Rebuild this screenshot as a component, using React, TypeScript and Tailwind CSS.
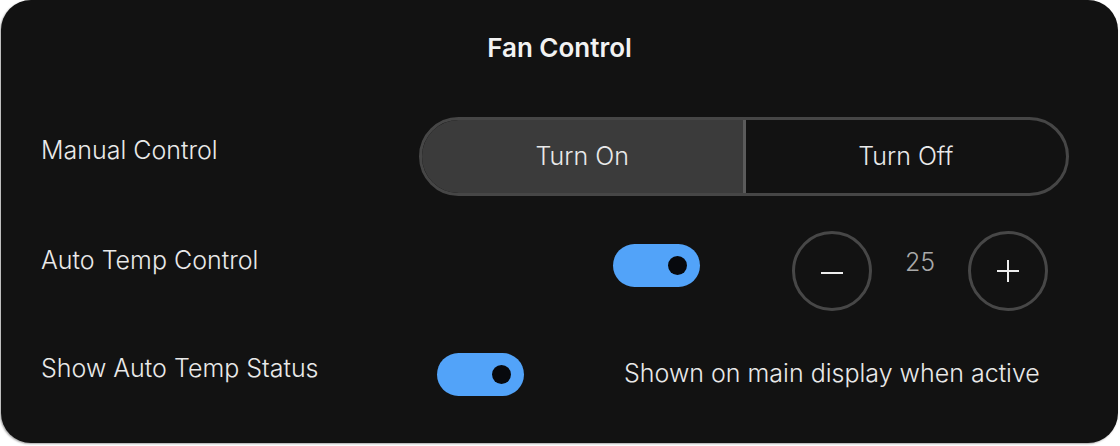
import type { ReactNode } from 'react';

function Toggle({ className = '' }: { className?: string }) {
  return (
    <div
      className={`flex h-[43px] w-[87px] shrink-0 items-center justify-end rounded-full bg-[#52a3f9] pr-[13px] ${className}`}
    >
      <span className="h-[19px] w-[19px] rounded-full bg-[#07090d]" />
    </div>
  );
}

function RoundButton({ children }: { children: ReactNode }) {
  return (
    <button className="flex h-[80px] w-[80px] shrink-0 items-center justify-center rounded-full border-[3px] border-[#474747] text-[#ededed]">
      {children}
    </button>
  );
}

export default function App() {
  return (
    <div className="h-[446px] w-[1120px] bg-white">
      <div className="ml-[1px] flex h-[443px] w-[1117px] flex-col rounded-[30px] bg-[#121212] font-['Inter',sans-serif] text-[#e9e9e9] shadow-[-1px_1px_2px_rgba(0,0,0,0.35)]">
        <h1 className="pt-[33px] text-center text-[26px] font-semibold leading-[30px] text-[#f2f2f2]">
          Fan Control
        </h1>

        <div className="mt-[54px] flex h-[79px] items-center pl-[40px] pr-[49px]">
          <span className="w-[378px] pb-[12px] text-[25px] font-light">Manual Control</span>
          <div className="flex h-[79px] flex-1 overflow-hidden rounded-full border-[3px] border-[#464646]">
            <button className="flex flex-1 items-center justify-center border-r-[3px] border-[#5b5b5b] bg-[#3b3b3b] text-[25px] font-light">
              Turn On
            </button>
            <button className="flex flex-1 items-center justify-center text-[25px] font-light">
              Turn Off
            </button>
          </div>
        </div>

        <div className="mt-[35px] flex h-[80px] items-center pl-[40px]">
          <span className="w-[572px] pb-[20px] text-[25px] font-light">Auto Temp Control</span>
          <Toggle className="mb-[12px]" />
          <div className="ml-[92px]">
            <RoundButton>
              <svg width="24" height="24" viewBox="0 0 24 24" stroke="currentColor" strokeWidth="2">
                <path d="M1 14h22" />
              </svg>
            </RoundButton>
          </div>
          <span className="w-[96px] pb-[16px] text-center text-[25px] font-light text-[#a9a9a9]">25</span>
          <RoundButton>
            <svg width="26" height="26" viewBox="0 0 26 26" stroke="currentColor" strokeWidth="2">
              <path d="M2 13h22M13 2v22" />
            </svg>
          </RoundButton>
        </div>

        <div className="mt-[41px] flex h-[44px] items-center pl-[40px]">
          <span className="w-[396px] pb-[10px] text-[25px] font-light">Show Auto Temp Status</span>
          <Toggle />
          <span className="ml-[100px] text-[25px] font-light">Shown on main display when active</span>
        </div>
      </div>
    </div>
  );
}
